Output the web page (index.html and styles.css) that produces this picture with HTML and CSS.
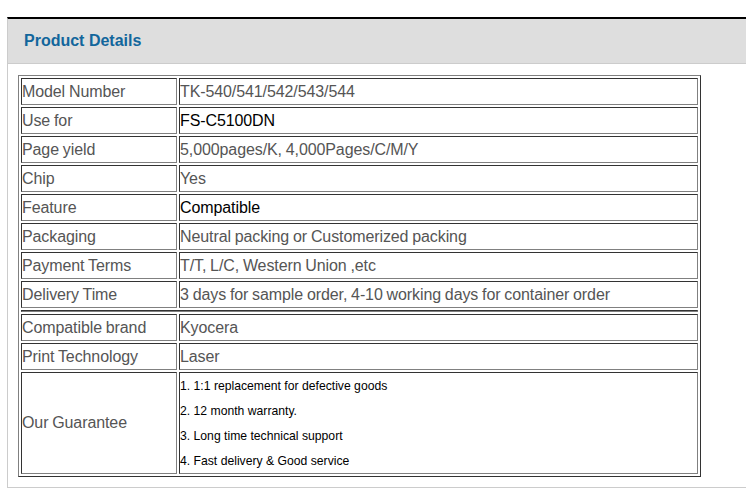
FILE: index.html
```html
<!DOCTYPE html>
<html>
<head>
<meta charset="utf-8">
<title>Product Details</title>
<link rel="stylesheet" href="styles.css">
</head>
<body>
<div class="box">
  <div class="box-head">Product Details</div>
  <div class="box-body">
    <table class="spec">
      <tr><td class="k">Model Number</td><td>TK-540/541/542/543/544</td></tr>
      <tr><td class="k">Use for</td><td class="dark">FS-C5100DN</td></tr>
      <tr><td class="k">Page yield</td><td>5,000pages/K, 4,000Pages/C/M/Y</td></tr>
      <tr><td class="k">Chip</td><td>Yes</td></tr>
      <tr><td class="k">Feature</td><td class="dark">Compatible</td></tr>
      <tr><td class="k">Packaging</td><td>Neutral packing or Customerized packing</td></tr>
      <tr><td class="k">Payment Terms</td><td>T/T, L/C, Western Union ,etc</td></tr>
      <tr><td class="k">Delivery Time</td><td>3 days for sample order, 4-10 working days for container order</td></tr>
      <tr class="gap"><td colspan="2"></td></tr>
      <tr><td class="k">Compatible brand</td><td>Kyocera</td></tr>
      <tr><td class="k">Print Technology</td><td>Laser</td></tr>
      <tr class="tall"><td class="k">Our Guarantee</td><td class="list">
        <div>1. 1:1 replacement for defective goods</div>
        <div>2. 12 month warranty.</div>
        <div>3. Long time technical support</div>
        <div>4. Fast delivery &amp; Good service</div>
      </td></tr>
    </table>
  </div>
</div>
</body>
</html>
```

FILE: styles.css
```css
html, body {
  margin: 0;
  padding: 0;
  background: #fff;
}
body {
  font-family: "Liberation Sans", Arial, sans-serif;
  padding: 17px 0 0 7px;
}
.box {
  border-top: 2px solid #000;
  border-left: 1px solid #ccc;
}
.box-head {
  height: 44px;
  line-height: 44px;
  background: #dedede;
  border-bottom: 1px solid #ccc;
  padding-left: 16px;
  font-size: 16px;
  font-weight: bold;
  color: #12669c;
}
.box-body {
  padding: 11px 0 10px 10px;
  border-bottom: 1px solid #ccc;
}
.spec {
  width: 683px;
  table-layout: fixed;
  border-collapse: separate;
  border-spacing: 2px;
  border: 1px solid;
  border-color: #808080 #333 #333 #808080;
  font-size: 16px;
  letter-spacing: -0.1px;
  word-spacing: -0.5px;
  color: #555;
}
.spec td {
  height: 25px;
  padding: 0;
  border: 1px solid;
  border-color: #333 #808080 #808080 #333;
  vertical-align: middle;
  white-space: nowrap;
}
.spec td.k {
  width: 154px;
}
.spec td.dark {
  color: #000;
}
.spec tr.gap td {
  height: 0;
  font-size: 0;
  line-height: 0;
}
.spec tr.tall td {
  height: 100px;
}
.spec td.list {
  font-size: 12.2px;
  letter-spacing: 0;
  word-spacing: 0;
  color: #000;
}
.spec td.list div {
  line-height: 25px;
  height: 25px;
  padding-top: 1px;
  box-sizing: border-box;
}
```
